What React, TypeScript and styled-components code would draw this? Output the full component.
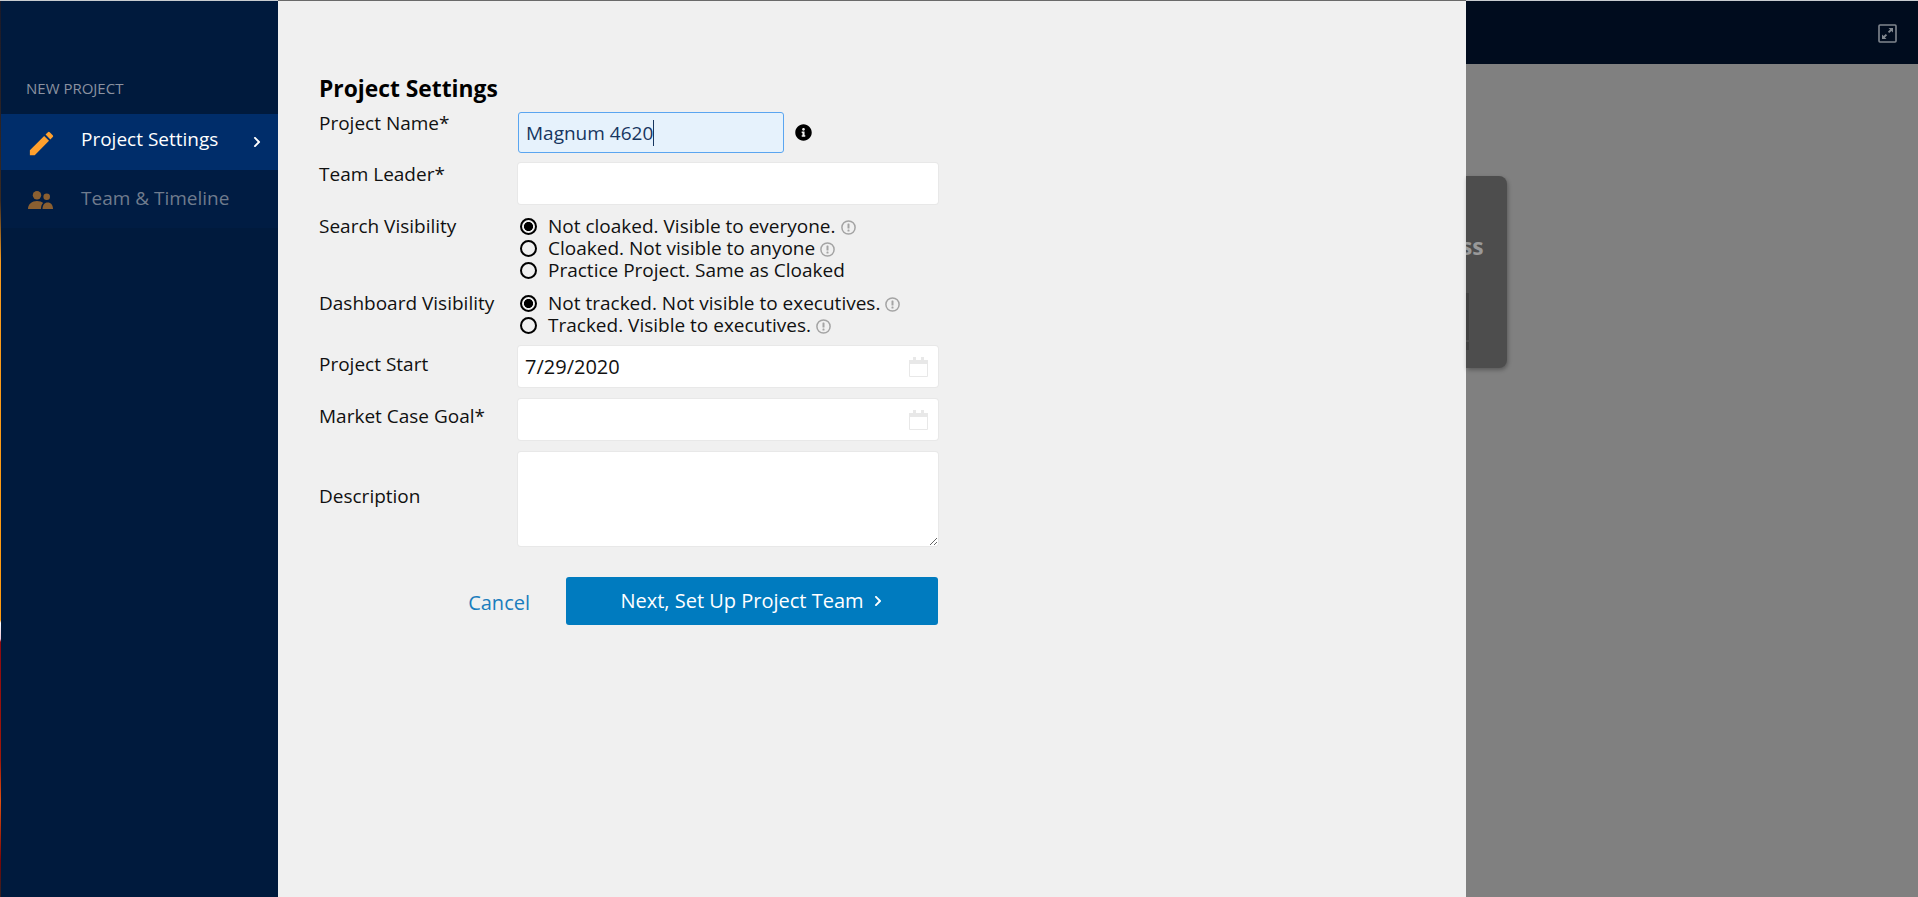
import React from "react"
import styled, { createGlobalStyle } from "styled-components"
import { FaInfoCircle, FaChevronRight } from "react-icons/fa"
import { MdEdit } from "react-icons/md"

const GlobalStyle = createGlobalStyle`
  html, body {
    margin: 0;
    padding: 0;
    height: 100%;
    overflow: hidden;
    background: #808080;
    font-family: "Open Sans", "Liberation Sans", sans-serif;
  }
  * {
    box-sizing: border-box;
  }
`

const Page = styled.div`
  display: flex;
  flex-direction: column;
  width: 1918px;
  height: 897px;
`

const TopLine = styled.div`
  flex: none;
  height: 1px;
  background: linear-gradient(
    to right,
    #c8ccd0 0,
    #c8ccd0 278px,
    #6a6a6a 278px,
    #6a6a6a 1466px,
    #c8ccd0 1466px
  );
`

const Main = styled.div`
  display: flex;
  flex: 1;
  min-height: 0;
`

const EdgeStrip = styled.div`
  flex: none;
  width: 1px;
  background: linear-gradient(
    to bottom,
    #1a1a2a 0,
    #3a2a20 200px,
    #f79a1e 260px,
    #ff9a10 619px,
    #ffffff 622px,
    #f0c8d8 638px,
    #8e0a10 641px,
    #a01808 760px,
    #e05010 800px,
    #7a0505 860px,
    #3a2020 890px
  );
`

const Sidebar = styled.aside`
  flex: none;
  width: 277px;
  padding-top: 77px;
  background: #001a3d;
`

const SidebarTitle = styled.div`
  height: 20px;
  margin-bottom: 16px;
  padding-left: 25px;
  font-size: 15px;
  line-height: 20px;
  color: #8b92a0;
`

const NavItem = styled.div<{ $active?: boolean }>`
  display: flex;
  align-items: center;
  height: ${(props) => (props.$active ? "56px" : "58px")};
  padding: 0 15px 0 ${(props) => (props.$active ? "25px" : "27px")};
  background: ${(props) => (props.$active ? "#002d6a" : "#001c43")};
  color: ${(props) => (props.$active ? "#ffffff" : "#6f7b8d")};
`

const NavIcon = styled.span<{ $active?: boolean }>`
  display: flex;
  flex: none;
  align-items: center;
  width: ${(props) => (props.$active ? "55px" : "53px")};
  margin-top: 2px;
  font-size: 31px;
  color: #ffa02d;
`

const TeamIcon = styled.svg`
  width: 25px;
  height: 18px;
`

const NavLabel = styled.span<{ $active?: boolean }>`
  flex: 1;
  margin-top: ${(props) => (props.$active ? "-6px" : "-2px")};
  font-size: 19px;
  line-height: 24px;
`

const NavChevron = styled(FaChevronRight)`
  font-size: 12px;
  color: #ffffff;
`

const Panel = styled.main`
  flex: none;
  width: 1188px;
  padding: 73px 0 0 41px;
  background: #f0f0f0;
`

const Form = styled.form`
  display: flex;
  flex-direction: column;
  gap: 10px;
  width: 619px;
`

const Heading = styled.h2`
  margin: 0 0 -2px;
  font-size: 22.8px;
  font-weight: 700;
  line-height: 30px;
  color: #000000;
`

const Row = styled.div<{ $top?: number }>`
  display: grid;
  grid-template-columns: 199px 1fr;
  margin-top: ${(props) => props.$top ?? 0}px;
`

const Label = styled.label<{ $offset?: number; $lineHeight?: number }>`
  margin-top: ${(props) => props.$offset ?? -1}px;
  font-size: 19px;
  line-height: ${(props) => props.$lineHeight ?? 24}px;
  color: #111111;
`

const InputRow = styled.div`
  display: flex;
  align-items: center;
  gap: 11px;
`

const FocusedField = styled.div`
  display: flex;
  align-items: center;
  width: 266px;
  height: 41px;
  padding: 0 7px;
  border: 1px solid #5aa5f0;
  border-radius: 3px;
  background: #e6f2fc;
  font-size: 19px;
  color: #17365f;
`

const Caret = styled.span`
  width: 1px;
  height: 26px;
  background: #17365f;
`

const InfoIcon = styled(FaInfoCircle)`
  font-size: 17px;
  color: #000000;
`

const FieldWrap = styled.div`
  position: relative;
  height: 41px;
`

const Field = styled.input<{ $date?: boolean }>`
  display: block;
  width: 100%;
  height: 41px;
  padding: 0 7px;
  border: 0;
  border-radius: 3px;
  background: #ffffff;
  box-shadow: 0 0 0 1px #e8e8e8;
  outline: none;
  font-family: inherit;
  font-size: ${(props) => (props.$date ? "20px" : "19px")};
  color: #111111;
`

const CalendarIcon = styled.svg`
  position: absolute;
  top: 11px;
  right: 10px;
  width: 19px;
  height: 20px;
`

const Area = styled.textarea`
  display: block;
  width: 100%;
  height: 94px;
  padding: 7px;
  border: 0;
  border-radius: 3px;
  background: #ffffff;
  box-shadow: 0 0 0 1px #e8e8e8;
  outline: none;
  font-family: inherit;
  font-size: 19px;
`

const RadioGroup = styled.div`
  display: flex;
  flex-direction: column;
`

const RadioLine = styled.label`
  display: flex;
  align-items: center;
  height: 22px;
  font-size: 19px;
  white-space: nowrap;
  color: #111111;
`

const RadioInput = styled.input`
  appearance: none;
  flex: none;
  width: 17px;
  height: 17px;
  margin: 0 11px 0 2px;
  border: 2px solid #000000;
  border-radius: 50%;
  background: transparent;

  &:checked {
    background: radial-gradient(circle, #000000 0, #000000 4.2px, transparent 4.9px);
  }
`

const HintIcon = styled.svg`
  flex: none;
  width: 15px;
  height: 15px;
  margin: 3px 0 0 5px;
`

const Actions = styled.div`
  display: flex;
  align-items: flex-start;
  justify-content: flex-end;
  gap: 36px;
  margin-top: 21px;
`

const CancelLink = styled.a`
  margin-top: 14px;
  font-size: 20px;
  line-height: 24px;
  color: #1a7dbd;
`

const NextButton = styled.button`
  display: flex;
  align-items: center;
  justify-content: center;
  gap: 8px;
  width: 372px;
  height: 48px;
  padding: 0 0 2px;
  border: 0;
  border-radius: 3px;
  background: #007bbf;
  font-family: inherit;
  font-size: 20px;
  color: #ffffff;
`

const ButtonChevron = styled(FaChevronRight)`
  margin-top: 2px;
  font-size: 12px;
`

const Backdrop = styled.div`
  display: flex;
  flex: 1;
  flex-direction: column;
  min-width: 0;
  background: #808080;
`

const TopBar = styled.header`
  display: flex;
  flex: none;
  align-items: center;
  justify-content: flex-end;
  height: 63px;
  padding: 0 21px 0 0;
  background: #000c1e;
`

const ExpandIcon = styled.svg`
  width: 19px;
  height: 19px;
  margin-top: 1px;
`

const Behind = styled.div`
  padding-top: 112px;
`

const CardEdge = styled.div`
  position: relative;
  width: 41px;
  height: 192px;
  padding-top: 59px;
  overflow: hidden;
  border-radius: 0 8px 8px 0;
  background: #4d4d4d;
  box-shadow: 1px 2px 4px rgba(0, 0, 0, 0.3);
  font-size: 22.8px;
  font-weight: 700;
  line-height: 24px;
  text-indent: -5px;
  color: #999999;
`

const CardSliver = styled.div`
  position: absolute;
  top: 117px;
  left: 0;
  width: 3px;
  height: 57px;
  background: linear-gradient(to bottom, #404040 0, #404040 47px, #4d4d4d 47px, #4d4d4d 49px, #404040 49px);
`

function Hint() {
  return (
    <HintIcon viewBox="0 0 15 15">
      <circle cx="7.5" cy="7.5" r="6.6" fill="none" stroke="#a4a4a4" strokeWidth="1.5" />
      <rect x="6.500" y="3.500" width="2" height="5" rx="0.6" fill="#a4a4a4" />
      <rect x="6.500" y="9.600" width="2" height="1.900" rx="0.6" fill="#a4a4a4" />
    </HintIcon>
  )
}

function Calendar() {
  return (
    <CalendarIcon viewBox="0 0 19 20">
      <path d="M0.5 3.500h18v16h-18z" fill="#ffffff" stroke="#e8e8e8" />
      <path d="M0 3h19v4H0z" fill="#e8e8e8" />
      <path d="M4 0h3v6H4zM12 0h3v6h-3z" fill="#e8e8e8" />
    </CalendarIcon>
  )
}

export default function App() {
  return (
    <Page>
      <GlobalStyle />
      <TopLine />
      <Main>
        <EdgeStrip />
        <Sidebar>
          <SidebarTitle>NEW PROJECT</SidebarTitle>
          <NavItem $active>
            <NavIcon $active>
              <MdEdit />
            </NavIcon>
            <NavLabel $active>Project Settings</NavLabel>
            <NavChevron />
          </NavItem>
          <NavItem>
            <NavIcon>
              <TeamIcon viewBox="0 0 25 18">
                <circle cx="9" cy="4.200" r="4.200" fill="#8a5f31" />
                <circle cx="18.700" cy="5.800" r="3.300" fill="#8a5f31" />
                <path d="M0 18c0-5 4-8 9-8 2.500 0 5 .8 6.200 2-1.600 1.200-2.200 3.500-2.200 6z" fill="#8a5f31" />
                <path d="M14.500 18c0-3.800 2-6.500 5.200-6.500S25 14.200 25 18z" fill="#8a5f31" />
              </TeamIcon>
            </NavIcon>
            <NavLabel>Team &amp; Timeline</NavLabel>
          </NavItem>
        </Sidebar>
        <Panel>
          <Form>
            <Heading>Project Settings</Heading>
            <Row>
              <Label>Project Name*</Label>
              <InputRow>
                <FocusedField>
                  Magnum 4620
                  <Caret />
                </FocusedField>
                <InfoIcon />
              </InputRow>
            </Row>
            <Row>
              <Label>Team Leader*</Label>
              <Field />
            </Row>
            <Row $top={1}>
              <Label $offset={0} $lineHeight={22}>Search Visibility</Label>
              <RadioGroup>
                <RadioLine>
                  <RadioInput type="radio" name="search" defaultChecked />
                  Not cloaked. Visible to everyone.
                  <Hint />
                </RadioLine>
                <RadioLine>
                  <RadioInput type="radio" name="search" />
                  Cloaked. Not visible to anyone
                  <Hint />
                </RadioLine>
                <RadioLine>
                  <RadioInput type="radio" name="search" />
                  Practice Project. Same as Cloaked
                </RadioLine>
              </RadioGroup>
            </Row>
            <Row $top={1}>
              <Label $offset={0} $lineHeight={22}>Dashboard Visibility</Label>
              <RadioGroup>
                <RadioLine>
                  <RadioInput type="radio" name="dashboard" defaultChecked />
                  Not tracked. Not visible to executives.
                  <Hint />
                </RadioLine>
                <RadioLine>
                  <RadioInput type="radio" name="dashboard" />
                  Tracked. Visible to executives.
                  <Hint />
                </RadioLine>
              </RadioGroup>
            </Row>
            <Row>
              <Label $offset={6}>Project Start</Label>
              <FieldWrap>
                <Field $date defaultValue="7/29/2020" />
                <Calendar />
              </FieldWrap>
            </Row>
            <Row $top={2}>
              <Label $offset={5}>Market Case Goal*</Label>
              <FieldWrap>
                <Field $date />
                <Calendar />
              </FieldWrap>
            </Row>
            <Row $top={2}>
              <Label $offset={32}>Description</Label>
              <Area />
            </Row>
            <Actions>
              <CancelLink>Cancel</CancelLink>
              <NextButton type="button">
                Next, Set Up Project Team
                <ButtonChevron />
              </NextButton>
            </Actions>
          </Form>
        </Panel>
        <Backdrop>
          <TopBar>
            <ExpandIcon viewBox="0 0 19 19">
              <rect x="1" y="1" width="17" height="17" rx="1" fill="none" stroke="#80878f" strokeWidth="1.6" />
              <path d="M10.500 4H15v4.500l-1.600-1.600-2.200 2.200-1.300-1.300 2.200-2.200z" fill="#80878f" />
              <path d="M8.500 15H4v-4.500l1.600 1.600 2.200-2.200 1.300 1.300-2.200 2.200z" fill="#80878f" />
            </ExpandIcon>
          </TopBar>
          <Behind>
            <CardEdge>
              ss
              <CardSliver />
            </CardEdge>
          </Behind>
        </Backdrop>
      </Main>
    </Page>
  )
}
